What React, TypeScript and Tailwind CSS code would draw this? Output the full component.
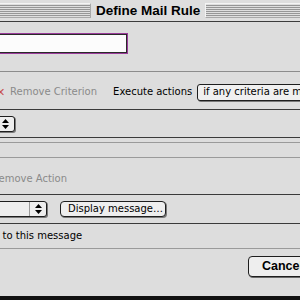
import React from "react";

const Stripes = ({ className }: { className: string }) => (
  <div className={`flex flex-col gap-px border border-[#f4f4f4] border-b-[#a8a8a8] border-r-[#a8a8a8] py-px ${className}`}>
    {[0, 1, 2, 3, 4, 5].map((i) => (
      <div key={i} className="h-px bg-[#969696]" />
    ))}
  </div>
);

const Arrows = () => (
  <svg width="7" height="10" viewBox="0 0 7 10" className="block">
    <path d="M3.5 0 L7 4 H0 Z M0 6 H7 L3.5 10 Z" fill="#000" />
  </svg>
);

export default function App() {
  const ui = "font-['DejaVu_Sans',sans-serif] text-[10px] leading-none";
  return (
    <div className={`w-[300px] h-[300px] overflow-hidden bg-[#dddddd] flex flex-col ${ui}`}>
      {/* title bar */}
      <div className="h-[22px] shrink-0 flex items-center gap-[5px] border-b border-[#3c3c3c] bg-[#dedede]">
        <Stripes className="w-[93px] ml-[-2px]" />
        <span className="font-['Liberation_Sans',sans-serif] font-bold text-[13.5px] text-black">Define Mail Rule</span>
        <Stripes className="flex-1 mr-[-2px]" />
      </div>

      {/* rule name */}
      <div className="h-[49px] shrink-0 pt-[11px]">
        <div className="ml-[-10px] w-[138px] h-[21px] border border-[#9a3c9a] bg-white">
          <div className="h-full border border-[#2a2a2a] bg-[#fcfcfc]" />
        </div>
      </div>

      {/* criteria header */}
      <div className="h-[38px] shrink-0 border-t border-[#8c8c8c] pt-[3px] flex items-center">
        <span className="ml-[-4px] w-[12px] text-[#c85050] text-[11px]">✕</span>
        <span className="ml-[2px] text-[#8a8a8a]">Remove Criterion</span>
        <span className="ml-[16px] text-black">Execute actions</span>
        <div className="ml-[5px] h-[17px] flex-1 mr-[-10px] rounded-[3px] border border-[#1e1e1e] bg-[#f0f0f0] shadow-[1px_1px_0_#7a7a7a] flex items-center pl-[5px] text-black whitespace-nowrap overflow-hidden">
          if any criteria are met
        </div>
      </div>

      {/* criterion row */}
      <div className="h-[28px] shrink-0 border-t border-[#3a3a3a] pt-[6px]">
        <div className="ml-[-20px] w-[35px] h-[16px] rounded-[3px] border border-[#1e1e1e] bg-[#eeeeee] shadow-[1px_1px_0_#7a7a7a] flex items-center justify-end pr-[5px]">
          <Arrows />
        </div>
      </div>

      <div className="h-[5px] shrink-0 border-t border-[#3a3a3a]" />
      <div className="h-[15px] shrink-0 border-t border-[#9a9a9a]" />

      {/* actions header */}
      <div className="h-[37px] shrink-0 border-t border-[#9a9a9a] pt-[5px] flex items-center">
        <span className="ml-[-8px] text-[#8a8a8a]">Remove Action</span>
      </div>

      {/* action row */}
      <div className="h-[29px] shrink-0 border-t border-[#3a3a3a] flex items-center gap-[13px]">
        <div className="ml-[-20px] w-[67px] h-[16px] rounded-[3px] border border-[#1e1e1e] bg-[#eeeeee] shadow-[1px_1px_0_#7a7a7a] flex">
          <div className="flex-1 border-r border-[#9a9a9a]" />
          <div className="w-[16px] flex items-center justify-center">
            <Arrows />
          </div>
        </div>
        <div className="w-[106px] h-[16px] rounded-[4px] border border-[#1e1e1e] bg-[#eeeeee] shadow-[1px_1px_0_#7a7a7a] flex items-center pl-[7px] text-black whitespace-nowrap">
          Display message…
        </div>
      </div>

      {/* reply row */}
      <div className="h-[25px] shrink-0 border-t border-[#3a3a3a] flex items-center">
        <span className="ml-[-4px] text-black">: to this message</span>
      </div>

      {/* buttons */}
      <div className="flex-1 border-t border-[#9a9a9a] flex justify-end pt-[7px]">
        <div className="w-[62px] h-[21px] mr-[-10px] rounded-[4px] border border-[#1e1e1e] bg-[#eeeeee] shadow-[1px_1px_0_#6a6a6a] flex items-center pl-[13px] font-['Liberation_Sans',sans-serif] font-bold text-[12.5px] text-black">
          Cancel
        </div>
      </div>
      <div className="h-[4px] shrink-0 bg-[#111111]" />
    </div>
  );
}
